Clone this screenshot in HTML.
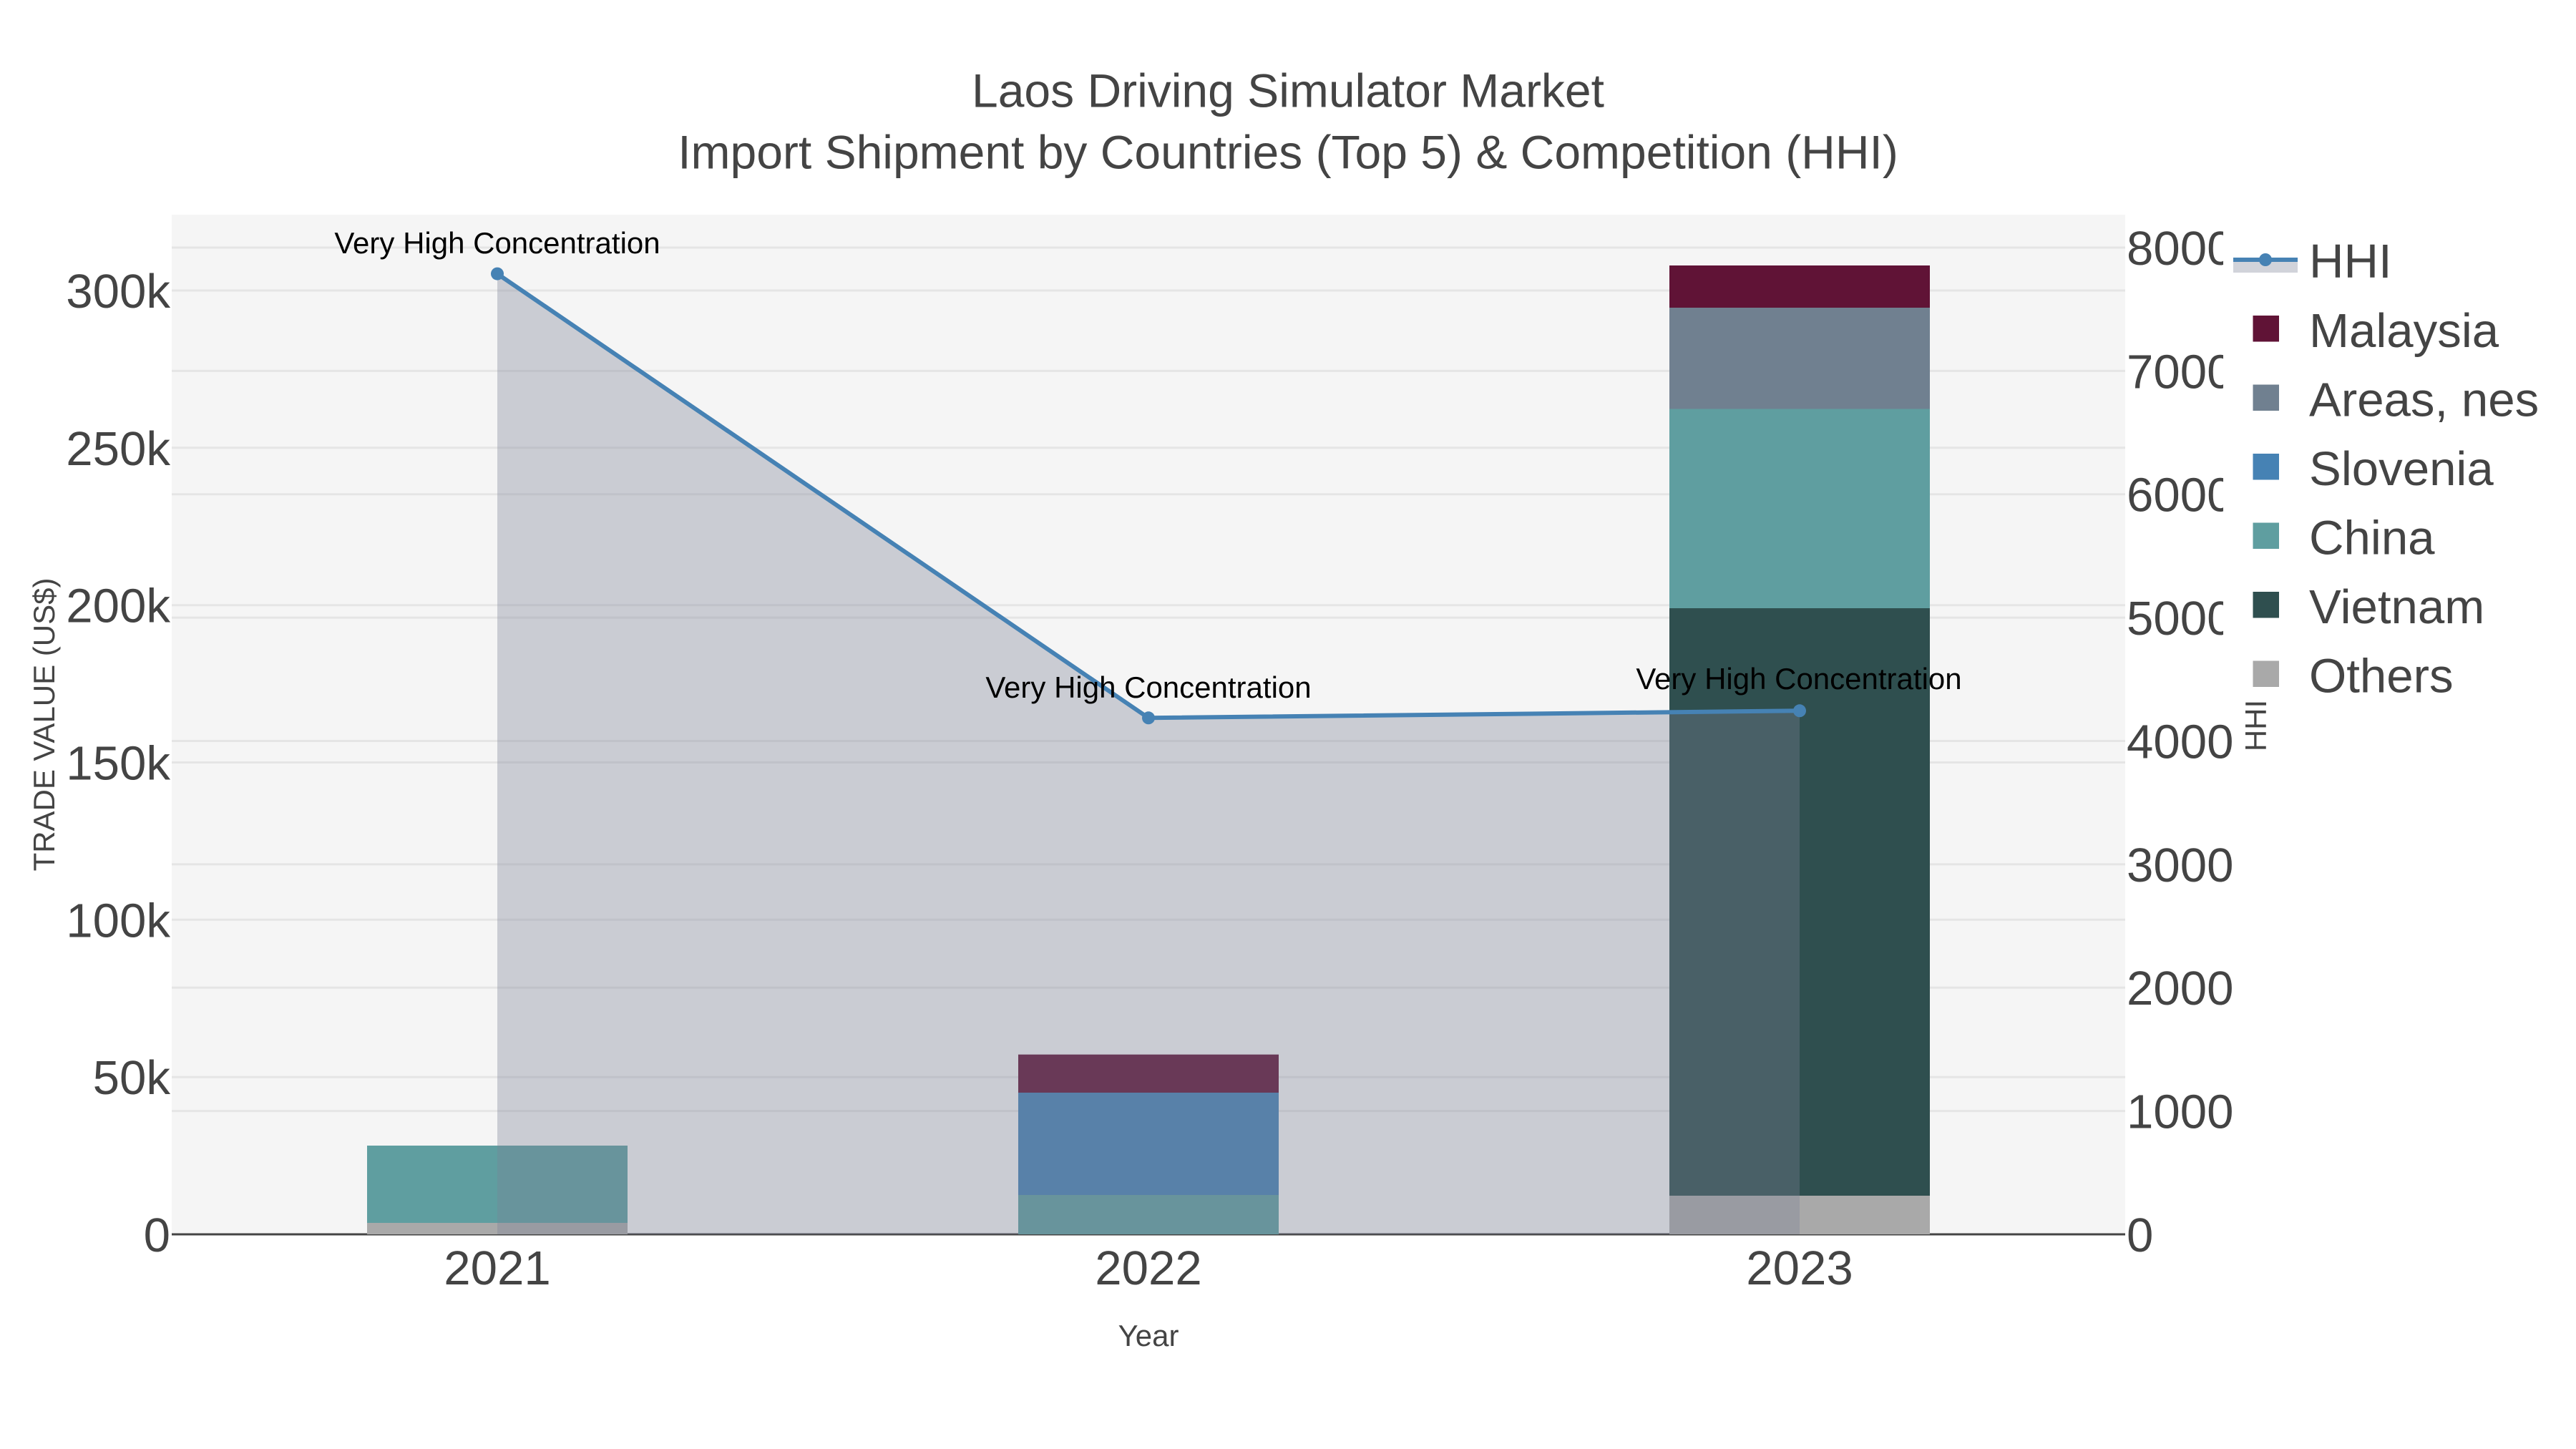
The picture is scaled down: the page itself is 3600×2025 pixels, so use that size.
<!DOCTYPE html>
<html>
<head>
<meta charset="utf-8">
<title>Laos Driving Simulator Market</title>
<style>
html,body{margin:0;padding:0;background:#fff;width:3600px;height:2025px;overflow:hidden}
svg{display:block}
text{font-family:"Liberation Sans",Arial,sans-serif;fill:#444}
.tick{font-size:67.2px}
.ttl{font-size:66px}
.axt{font-size:42px}
.ann{font-size:42px;fill:#000;text-anchor:middle}
.l{font-size:67.2px}
.g{stroke:#e5e5e5;stroke-width:3;fill:none}
</style>
</head>
<body>
<svg width="3600" height="2025" viewBox="0 0 3600 2025" xmlns="http://www.w3.org/2000/svg">
<rect width="3600" height="2025" fill="#fff"/>
<rect x="240" y="300" width="2730" height="1425" fill="#f5f5f5"/>

<g class="g">
<path d="M240 1505.2H2970M240 1285.3H2970M240 1065.5H2970M240 845.7H2970M240 625.8H2970M240 406H2970"/>
<path d="M240 1552.6H2970M240 1380.2H2970M240 1207.9H2970M240 1035.5H2970M240 863.1H2970M240 690.7H2970M240 518.4H2970M240 346H2970"/>
</g>
<rect x="240" y="1723.5" width="2730" height="3" fill="#444"/>

<!-- 2021 -->
<rect x="513" y="1709" width="364" height="16" fill="#a9a9a9"/>
<rect x="513" y="1601" width="364" height="108" fill="#5f9ea0"/>
<!-- 2022 -->
<rect x="1423" y="1670" width="364" height="55" fill="#5f9ea0"/>
<rect x="1423" y="1527" width="364" height="143" fill="#4682b4"/>
<rect x="1423" y="1473.7" width="364" height="53.3" fill="#601336"/>
<!-- 2023 -->
<rect x="2333" y="1671" width="364" height="54" fill="#a9a9a9"/>
<rect x="2333" y="850" width="364" height="821" fill="#2f4f4f"/>
<rect x="2333" y="571.5" width="364" height="278.5" fill="#5f9ea0"/>
<rect x="2333" y="430" width="364" height="141.5" fill="#708090"/>
<rect x="2333" y="371" width="364" height="59" fill="#601336"/>

<!-- HHI area and line -->
<path d="M695 382.6L1605 1003.3L2515 993.3V1725H695Z" fill="rgba(122,130,150,0.35)"/>
<path d="M695 382.6L1605 1003.3L2515 993.3" fill="none" stroke="#4682b4" stroke-width="6"/>
<circle cx="695" cy="382.6" r="9" fill="#4682b4"/>
<circle cx="1605" cy="1003.3" r="9" fill="#4682b4"/>
<circle cx="2515" cy="993.3" r="9" fill="#4682b4"/>

<text class="ann" x="695" y="354">Very High Concentration</text>
<text class="ann" x="1605" y="975">Very High Concentration</text>
<text class="ann" x="2514" y="963">Very High Concentration</text>

<!-- left ticks -->
<g class="tick" text-anchor="end">
<text x="238" y="1749">0</text>
<text x="238" y="1529.2">50k</text>
<text x="238" y="1309.3">100k</text>
<text x="238" y="1089.5">150k</text>
<text x="238" y="869.7">200k</text>
<text x="238" y="649.8">250k</text>
<text x="238" y="430">300k</text>
</g>

<!-- right ticks -->
<g class="tick" text-anchor="start">
<text x="2972" y="1749">0</text>
<text x="2972" y="1576.6">1000</text>
<text x="2972" y="1404.2">2000</text>
<text x="2972" y="1231.9">3000</text>
<text x="2972" y="1059.5">4000</text>
<text x="2972" y="887.1">5000</text>
<text x="2972" y="714.7">6000</text>
<text x="2972" y="542.4">7000</text>
<text x="2972" y="370">8000</text>
</g>

<!-- x ticks -->
<g class="tick" text-anchor="middle">
<text x="695" y="1795">2021</text>
<text x="1605" y="1795">2022</text>
<text x="2515" y="1795">2023</text>
</g>

<text class="axt" x="1605" y="1881" text-anchor="middle">Year</text>
<text class="axt" text-anchor="middle" transform="translate(76 1012.5) rotate(-90)">TRADE VALUE (US$)</text>

<!-- title -->
<g class="ttl" text-anchor="middle">
<text x="1800" y="149.5">Laos Driving Simulator Market</text>
<text x="1800" y="235.5">Import Shipment by Countries (Top 5) &amp; Competition (HHI)</text>
</g>

<!-- legend -->
<rect x="3107" y="300" width="493" height="678" fill="#fff"/>
<rect x="3121" y="363" width="90" height="18" fill="rgba(122,130,150,0.35)"/>
<path d="M3121 363H3211" stroke="#4682b4" stroke-width="6" fill="none"/>
<circle cx="3166" cy="363" r="9" fill="#4682b4"/>
<rect x="3148.5" y="441" width="36.5" height="36.5" fill="#601336"/>
<rect x="3148.5" y="537.5" width="36.5" height="36.5" fill="#708090"/>
<rect x="3148.5" y="634" width="36.5" height="36.5" fill="#4682b4"/>
<rect x="3148.5" y="730.5" width="36.5" height="36.5" fill="#5f9ea0"/>
<rect x="3148.5" y="827" width="36.5" height="36.5" fill="#2f4f4f"/>
<rect x="3148.5" y="923.5" width="36.5" height="36.5" fill="#a9a9a9"/>
<g class="l">
<text x="3227" y="388">HHI</text>
<text x="3227" y="485">Malaysia</text>
<text x="3227" y="581.5">Areas, nes</text>
<text x="3227" y="678">Slovenia</text>
<text x="3227" y="774.5">China</text>
<text x="3227" y="871">Vietnam</text>
<text x="3227" y="967.5">Others</text>
</g>

<text class="axt" text-anchor="middle" transform="translate(3167 1014) rotate(-90)">HHI</text>
</svg>
</body>
</html>
